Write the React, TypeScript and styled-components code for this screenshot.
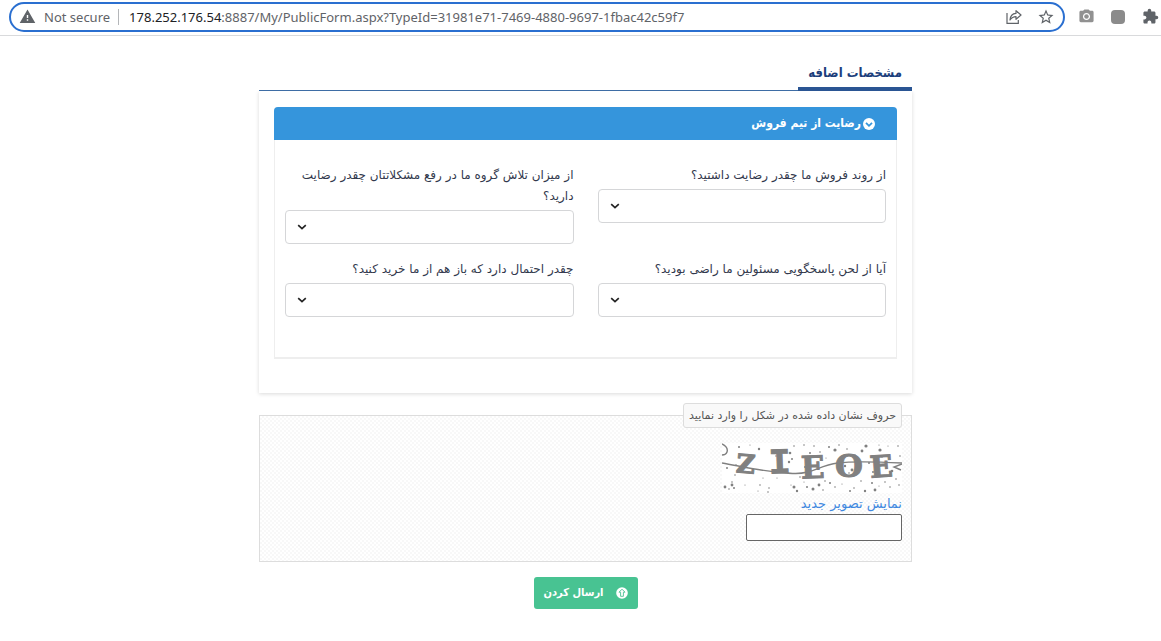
import React from "react";
import styled, { createGlobalStyle } from "styled-components";
import { MdCameraAlt, MdExtension, MdStarBorder, MdWarning } from "react-icons/md";

const GlobalStyle = createGlobalStyle`
  *, *::before, *::after { box-sizing: border-box; }
  body {
    margin: 0;
    background: #fff;
    color: #32394d;
    font-family: "DejaVu Sans", sans-serif;
    font-size: 12px;
    line-height: 21px;
  }
`;

const BrowserBar = styled.header`
  display: flex;
  align-items: center;
  gap: 11px;
  height: 36px;
  padding: 0 1px 2px 9px;
  border-bottom: 1px solid #d9dadc;
  color: #5f6368;
  overflow: hidden;
`;

const AddressBar = styled.div`
  display: flex;
  flex: 1;
  align-items: center;
  min-width: 0;
  height: 30px;
  padding: 0 7px 0 8px;
  border: 2px solid #2a6fd0;
  border-radius: 15px;
  font-family: "Noto Sans", "Open Sans", sans-serif;
  font-size: 13px;
  line-height: 20px;
  white-space: nowrap;
`;

const Security = styled.span`
  padding: 0 8px;
  border-right: 1px solid #b4b6b9;
  line-height: 16px;
`;

const Url = styled.span`
  flex: 1;
  overflow: hidden;
  padding-left: 10px;
`;

const Host = styled.span`
  color: #202124;
`;

const IconButton = styled.button`
  display: flex;
  align-items: center;
  justify-content: center;
  width: 20px;
  height: 20px;
  padding: 0;
  border: 0;
  background: none;
  color: ${(p) => p.color || "#5f6368"};
`;

const IconGroup = styled.div`
  display: flex;
  gap: 12px;
`;

const Page = styled.main`
  padding: 20px 0 20px 10px;
`;

const Form = styled.form`
  display: flex;
  flex-direction: column;
  max-width: 653px;
  margin: 0 auto;
`;

const TabList = styled.div`
  display: flex;
  border-bottom: 1px solid #3e6da5;
`;

const Tab = styled.button`
  height: 35px;
  margin-bottom: -1px;
  padding: 2px 10px 0;
  border: 0;
  border-bottom: 4px solid #2a5593;
  background: none;
  color: #1d3f7c;
  font: bold 13px/28px "DejaVu Sans Condensed", "DejaVu Sans", sans-serif;
`;

const Panel = styled.section`
  padding: 16px 15px 34px;
  box-shadow: 0 1px 4px rgba(0, 0, 0, 0.15);
  clip-path: inset(0 -6px -6px -6px);
`;

const Card = styled.div`
  border: solid #eee;
  border-width: 0 1px 2px;
  border-radius: 4px 4px 0 0;
`;

const CardTitle = styled.h2`
  display: flex;
  align-items: center;
  gap: 2px;
  height: 33px;
  margin: 0 -1px;
  padding: 0 22px;
  border-radius: 4px 4px 0 0;
  background: #3595dc;
  color: #fff;
  font-family: "DejaVu Sans Condensed", "DejaVu Sans", sans-serif;
  font-size: 12px;
  font-weight: bold;
`;

const Questions = styled.div`
  display: grid;
  grid-template-columns: 1fr 1fr;
  gap: 15px 24px;
  padding: 25px 10px 40px;
`;

const Field = styled.div`
  display: flex;
  flex-direction: column;
  gap: 3px;
`;

const SelectBox = styled.div`
  position: relative;
  display: flex;
`;

const Select = styled.select`
  appearance: none;
  width: 100%;
  height: 34px;
  padding: 0 12px;
  border: 1px solid #d5d6d8;
  border-radius: 4px;
  background: #fff;
  font: inherit;
`;

const SelectArrow = styled.svg`
  position: absolute;
  left: 12px;
  top: 12px;
  pointer-events: none;
`;

const CaptchaBox = styled.fieldset`
  display: flex;
  flex-direction: column;
  align-items: flex-start;
  min-width: 0;
  margin: 10px 0 15px;
  padding: 15px 9px 20px;
  border: 1px solid #ddd;
  background: repeating-conic-gradient(#f8f8f8 0% 25%, #fff 0% 50%) 0 0 / 4px 4px;
`;

const CaptchaLegend = styled.legend`
  padding: 0 5px;
  border: 1px solid #ddd;
  border-radius: 3px;
  background: #f9f9f9;
  color: #555;
  font-size: 11px;
  line-height: 23px;
`;

const CaptchaImage = styled.svg`
  display: block;
  background: #fff;
`;

const RefreshLink = styled.a`
  color: #4088e0;
  font-size: 13px;
  text-decoration: none;
`;

const CaptchaInput = styled.input`
  width: 156px;
  height: 27px;
  border: 1px solid #666;
  border-radius: 2px;
  background: #fff;
`;

const SubmitButton = styled.button`
  display: flex;
  align-items: center;
  align-self: center;
  gap: 12px;
  height: 32px;
  padding: 0 10px;
  border: 0;
  border-radius: 3px;
  background: #48c392;
  color: #fff;
  font: bold 11px/20px "DejaVu Sans Condensed", "DejaVu Sans", sans-serif;
`;

const questions = [
  { id: "sales", label: "از روند فروش ما چقدر رضایت داشتید؟" },
  { id: "effort", label: "از میزان تلاش گروه ما در رفع مشکلاتتان چقدر رضایت دارید؟" },
  { id: "tone", label: "آیا از لحن پاسخگویی مسئولین ما راضی بودید؟" },
  { id: "again", label: "چقدر احتمال دارد که باز هم از ما خرید کنید؟" },
];

const letters = [
  { char: "Z", x: 23, y: 30, angle: 5, size: 26, font: "DejaVu Serif" },
  { char: "I", x: 58, y: 30, angle: -2, size: 36, font: "Liberation Mono" },
  { char: "E", x: 91, y: 35, angle: -2, size: 31, font: "DejaVu Serif" },
  { char: "O", x: 127, y: 34, angle: 0, size: 32, font: "DejaVu Serif" },
  { char: "E", x: 160, y: 34, angle: -4, size: 30, font: "DejaVu Serif" },
];

// Speckles: x, y, radius
const specks = [
  [17, 4, 1], [37, 6, 1.2], [28, 2, 0.6], [54, 13, 0.8], [72, 3, 0.8], [82, 2, 0.8], [92, 3, 0.8], [88, 10, 1],
  [98, 9, 0.8], [107, 4, 1], [113, 7, 1.6], [117, 2, 0.8], [125, 6, 0.8], [133, 12, 0.8], [140, 8, 1.4], [144, 3, 1.6],
  [158, 7, 1.6], [160, 14, 0.8], [166, 3, 0.6], [176, 3, 0.8], [157, 2, 0.6], [104, 15, 0.6], [70, 16, 1],
  [68, 10, 1.3], [67, 19, 1.2], [5, 25, 1], [13, 32, 0.8], [14, 22, 0.8], [3, 44, 1.4], [7, 46, 0.8],
  [10, 42, 1.4], [12, 45, 1], [10, 39, 0.8], [23, 42, 0.6], [38, 42, 0.8], [47, 45, 0.8], [36, 48, 0.6],
  [46, 49, 0.8], [41, 35, 0.6], [55, 35, 0.6], [72, 44, 1.5], [75, 48, 1.2], [69, 42, 0.6], [85, 44, 1],
  [82, 39, 0.6], [91, 46, 1.5], [97, 42, 1.4], [101, 47, 0.8], [103, 38, 0.8], [108, 40, 1], [113, 44, 0.8],
  [120, 41, 0.6], [128, 48, 1], [132, 45, 0.8], [143, 48, 1.2], [139, 38, 0.8], [150, 40, 1], [153, 47, 1.4],
  [157, 43, 0.6], [163, 39, 0.8], [168, 44, 0.8], [174, 36, 0.8], [177, 42, 0.8], [123, 23, 1.2], [130, 27, 1.4],
  [127, 30, 0.8], [151, 29, 1], [147, 20, 1], [170, 28, 1.3], [83, 24, 1], [78, 34, 0.8], [178, 13, 0.8],
];

function ShareIcon() {
  return (
    <svg width="18" height="18" viewBox="0 0 18 18" fill="none" stroke="currentColor" strokeWidth="1.200" aria-hidden="true">
      <path d="M2 5V15.300H13.300V12" />
      <path d="M5 12C5.300 8 7.500 5.600 11 5.400V2.600L16 7L11 11.300V8.600C8.500 8.600 6.600 9.600 5 12Z" strokeLinejoin="round" />
    </svg>
  );
}

function ChevronCircle() {
  return (
    <svg width="12" height="12" viewBox="0 0 12 12" fill="none" aria-hidden="true">
      <circle cx="6" cy="6" r="6" fill="#fff" />
      <path d="M3 4.800L6 7.800L9 4.800" stroke="#3595dc" strokeWidth="1.800" />
    </svg>
  );
}

function UploadCircle() {
  return (
    <svg width="12" height="12" viewBox="0 0 12 12" fill="none" aria-hidden="true">
      <circle cx="6" cy="6" r="5.800" fill="#fff" />
      <path d="M6 2.200L9 5.200H7.400V9.300H4.600V5.200H3Z" stroke="#48c392" strokeWidth="0.900" />
    </svg>
  );
}

function Captcha() {
  return (
    <CaptchaImage width="180" height="50" viewBox="0 0 180 50" direction="ltr" role="img" aria-label="کد امنیتی">
      <g fill="#808080">
        {specks.map(([x, y, r], i) => (
          <circle key={i} cx={x} cy={y} r={r} />
        ))}
      </g>
      <g fill="#808080" stroke="#808080" strokeWidth="1" fontWeight="bold" textAnchor="middle">
        {letters.map((l, i) => (
          <text
            key={i}
            x={l.x}
            y={l.y}
            fontFamily={`${l.font}, serif`}
            fontSize={l.size}
            transform={`rotate(${l.angle} ${l.x} ${l.y})`}
          >
            {l.char}
          </text>
        ))}
      </g>
      <g fill="none" stroke="#808080" strokeWidth="1.400">
        <path d="M0 20C22 24 35 27 54 29S77 31 86 29S101 22 116 20S160 19 180 20" />
        <path d="M0 1C4 3 6 6 5 9S2 12 0 12M180 21L172 24L179 27" />
      </g>
    </CaptchaImage>
  );
}

export default function App() {
  return (
    <>
      <GlobalStyle />
      <BrowserBar>
        <AddressBar>
          <MdWarning size={17} aria-hidden="true" />
          <Security>Not secure</Security>
          <Url>
            <Host>178.252.176.54</Host>:8887/My/PublicForm.aspx?TypeId=31981e71-7469-4880-9697-1fbac42c59f7
          </Url>
          <IconGroup>
            <IconButton type="button" aria-label="Share"><ShareIcon /></IconButton>
            <IconButton type="button" aria-label="Bookmark"><MdStarBorder size={18} /></IconButton>
          </IconGroup>
        </AddressBar>
        <IconGroup>
          <IconButton type="button" color="#919191" aria-label="Screenshot"><MdCameraAlt size={17} /></IconButton>
          <IconButton type="button" color="#8b8b8b" aria-label="Extension">
            <svg width="14" height="14" aria-hidden="true"><rect width="14" height="14" rx="4" fill="currentColor" /></svg>
          </IconButton>
          <IconButton type="button" aria-label="Extensions"><MdExtension size={17} /></IconButton>
        </IconGroup>
      </BrowserBar>
      <Page dir="rtl" lang="fa">
        <Form onSubmit={(e) => e.preventDefault()}>
          <TabList role="tablist">
            <Tab type="button" role="tab" aria-selected="true">مشخصات اضافه</Tab>
          </TabList>
          <Panel role="tabpanel">
            <Card>
              <CardTitle><ChevronCircle />رضایت از تیم فروش</CardTitle>
              <Questions>
                {questions.map((q) => (
                  <Field key={q.id}>
                    <label htmlFor={q.id}>{q.label}</label>
                    <SelectBox>
                      <Select id={q.id} />
                      <SelectArrow width="10" height="10" viewBox="0 0 10 10" fill="none" stroke="#222" strokeWidth="1.700">
                        <path d="M1.200 3.200L5 6.600L8.800 3.200" />
                      </SelectArrow>
                    </SelectBox>
                  </Field>
                ))}
              </Questions>
            </Card>
          </Panel>
          <CaptchaBox>
            <CaptchaLegend>حروف نشان داده شده در شکل را وارد نمایید</CaptchaLegend>
            <Captcha />
            <RefreshLink href="#captcha">نمایش تصویر جدید</RefreshLink>
            <CaptchaInput id="captcha" type="text" aria-label="حروف نشان داده شده در شکل را وارد نمایید" />
          </CaptchaBox>
          <SubmitButton type="submit"><UploadCircle />ارسال کردن</SubmitButton>
        </Form>
      </Page>
    </>
  );
}
